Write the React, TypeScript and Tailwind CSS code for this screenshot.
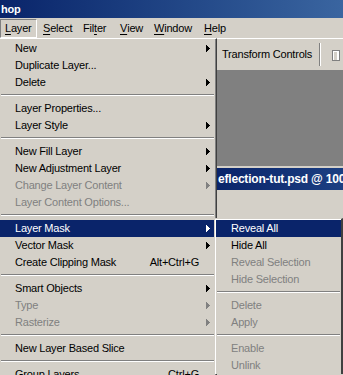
import React from 'react';

type Row =
  | 'sep'
  | { label: string; arrow?: boolean; shortcut?: string; disabled?: boolean; active?: boolean };

const layerMenu: Row[] = [
  { label: 'New', arrow: true },
  { label: 'Duplicate Layer...' },
  { label: 'Delete', arrow: true },
  'sep',
  { label: 'Layer Properties...' },
  { label: 'Layer Style', arrow: true },
  'sep',
  { label: 'New Fill Layer', arrow: true },
  { label: 'New Adjustment Layer', arrow: true },
  { label: 'Change Layer Content', arrow: true, disabled: true },
  { label: 'Layer Content Options...', disabled: true },
  'sep',
  { label: 'Layer Mask', arrow: true, active: true },
  { label: 'Vector Mask', arrow: true },
  { label: 'Create Clipping Mask', shortcut: 'Alt+Ctrl+G' },
  'sep',
  { label: 'Smart Objects', arrow: true },
  { label: 'Type', arrow: true, disabled: true },
  { label: 'Rasterize', arrow: true, disabled: true },
  'sep',
  { label: 'New Layer Based Slice' },
  'sep',
  { label: 'Group Layers', shortcut: 'Ctrl+G' },
];

const maskMenu: Row[] = [
  { label: 'Reveal All', active: true },
  { label: 'Hide All' },
  { label: 'Reveal Selection', disabled: true },
  { label: 'Hide Selection', disabled: true },
  'sep',
  { label: 'Delete', disabled: true },
  { label: 'Apply', disabled: true },
  'sep',
  { label: 'Enable', disabled: true },
  { label: 'Unlink', disabled: true },
];

const menuBar = [
  { label: 'Layer', key: 'L', rest: 'ayer', pre: '', w: 'w-[37px]' },
  { label: 'Select', key: 'S', rest: 'elect', pre: '', w: 'w-[40px]' },
  { label: 'Filter', key: 't', rest: 'er', pre: 'Fil', w: 'w-[37px]' },
  { label: 'View', key: 'V', rest: 'iew', pre: '', w: 'w-[34px]' },
  { label: 'Window', key: 'W', rest: 'indow', pre: '', w: 'w-[50px]' },
  { label: 'Help', key: 'H', rest: 'elp', pre: '', w: 'w-[36px]' },
];

const Arrow = ({ color }: { color: string }) => (
  <svg width="4" height="7" viewBox="0 0 4 7" className="shrink-0" shapeRendering="crispEdges">
    <path d="M0 0h1v7H0zM1 1h1v5H1zM2 2h1v3H2zM3 3h1v1H3z" fill={color} />
  </svg>
);

const Separator = () => (
  <div className="h-[9px] pt-[3px] px-[1px]">
    <div className="h-[2px] border-t border-[#808080] border-b border-b-white" />
  </div>
);

const MenuRows = ({ rows }: { rows: Row[] }) => (
  <>
    {rows.map((row, i) => {
      if (row === 'sep') return <Separator key={i} />;
      const text = row.active ? 'text-white' : row.disabled ? 'text-[#808080]' : 'text-black';
      const arrowColor = row.active ? '#ffffff' : row.disabled ? '#808080' : '#000000';
      return (
        <div
          key={i}
          className={`h-[17px] flex items-center pl-[15px] pr-[5px] whitespace-nowrap ${
            row.active ? 'bg-[#0a246a]' : ''
          } ${text}`}
        >
          <span className="flex-1">{row.label}</span>
          {row.shortcut && <span className="mr-[11px]">{row.shortcut}</span>}
          {row.arrow && <Arrow color={arrowColor} />}
        </div>
      );
    })}
  </>
);

const Cursor = () => (
  <svg width="13" height="21" viewBox="0 0 13 21" className="absolute left-[297px] top-[233px]">
    <path
      d="M0.5 0.5 V16.5 L4.5 12.5 L7.5 19.5 L9.5 18.5 L6.5 11.5 H11.5 Z"
      fill="#ffffff"
      stroke="#000000"
      strokeWidth="1"
      strokeLinejoin="miter"
    />
  </svg>
);

export default function App() {
  return (
    <div className="relative w-[343px] h-[375px] overflow-hidden bg-[#d4d0c8] font-['Liberation_Sans',Arial,sans-serif] text-[11px] tracking-[-0.2px] leading-[17px] select-none">
      {/* Title bar */}
      <div className="h-[18px] bg-gradient-to-r from-[#0a246a] to-[#3a65a0] flex items-center pl-[1px]">
        <span className="text-white font-bold">hop</span>
      </div>

      {/* Menu bar */}
      <div className="h-[20px] flex items-start">
        {menuBar.map((m, i) => (
          <div
            key={m.label}
            className={`${m.w} h-[19px] mt-[1px] flex items-center shrink-0 ${
              i === 0
                ? 'pl-[4px] border border-t-[#808080] border-l-[#808080] border-r-white border-b-white'
                : 'pl-[6px]'
            }`}
          >
            {m.pre}
            <span className="underline underline-offset-2">{m.key}</span>
            {m.rest}
          </div>
        ))}
      </div>

      <div className="flex">
        {/* Layer menu */}
        <div className="relative z-10 w-[217px] shrink-0 border-t border-white pt-[1px] pr-[1px] border-r border-r-[#404040] shadow-[inset_-1px_0_0_#808080]">
          <MenuRows rows={layerMenu} />
        </div>

        {/* Application behind */}
        <div className="flex-1 min-w-0 flex flex-col">
          <div className="h-[33px] border-t border-white border-b border-b-[#808080] flex items-center pl-[5px]">
            <span className="w-[97px] shrink-0 whitespace-nowrap">Transform Controls</span>
            <div className="h-[23px] w-[2px] shrink-0 border-l border-[#808080] border-r border-r-white" />
            <svg width="8" height="11" viewBox="0 0 8 11" className="ml-[11px] mt-[2px] shrink-0">
              <rect x="0.5" y="0.5" width="7" height="10" fill="#ffffff" stroke="#808080" />
              <rect x="2" y="2" width="3" height="8" fill="#d4d0c8" />
            </svg>
          </div>
          <div className="h-[95px] bg-[#808080]" />
          <div className="border-t-2 border-[#d4d0c8] h-[24px] bg-gradient-to-r from-[#0a246a] to-[#1c3f82] flex items-center overflow-hidden">
            <span className="text-white font-bold text-[12px] whitespace-nowrap pl-[1px]">eflection-tut.psd @ 100% (RGB/8)</span>
          </div>
          <div className="h-[28px] bg-[#d4d0c8]" />

          {/* Layer Mask submenu */}
          <div className="relative z-20 -ml-[3px] border-l border-[#d4d0c8] border-t border-t-[#d4d0c8] pt-[1px] pl-[1px] shadow-[inset_1px_1px_0_#ffffff] bg-[#d4d0c8] border-r-2 border-r-[#404040]">
            <MenuRows rows={maskMenu} />
          </div>
        </div>
      </div>

      <Cursor />
    </div>
  );
}
